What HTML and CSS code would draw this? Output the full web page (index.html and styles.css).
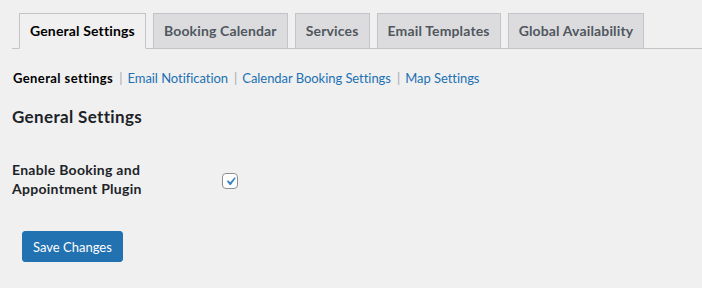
FILE: index.html
```html
<!DOCTYPE html>
<html>
    <head>
        <title>Booking Settings</title>
        <link rel="stylesheet" href="styles.css">
    </head>

    <body>
        <div class="wrap">
            <nav class="nav_tabs">
                <a class="nav_tab active" href="#">General Settings</a>
                <a class="nav_tab" href="#">Booking Calendar</a>
                <a class="nav_tab" href="#">Services</a>
                <a class="nav_tab" href="#">Email Templates</a>
                <a class="nav_tab" href="#">Global Availability</a>
            </nav>

            <ul class="subsub">
                <li class="current">General settings</li>
                <li class="sep">|</li>
                <li><a href="#">Email Notification</a></li>
                <li class="sep">|</li>
                <li><a href="#">Calendar Booking Settings</a></li>
                <li class="sep">|</li>
                <li><a href="#">Map Settings</a></li>
            </ul>

            <h2 class="section_title">General Settings</h2>

            <div class="form_row">
                <div class="form_label">Enable Booking and<br>Appointment Plugin</div>
                <div class="form_field">
                    <span class="check_box">
                        <svg viewBox="0 0 20 20" width="20" height="20">
                            <path d="M14.83 4.89l1.34.94-5.81 8.38H9.02L5.78 9.67l1.34-1.25 2.57 2.4z" fill="#3582c4"/>
                        </svg>
                    </span>
                </div>
            </div>

            <div class="submit_row">
                <button class="btn_primary">Save Changes</button>
            </div>
        </div>
    </body>
</html>
```

FILE: styles.css
```css
body {
    margin: 0;
    background-color: #f0f0f1;
    color: #1d2327;
    font-family: Lato, "Open Sans", sans-serif;
    font-size: 13px;
}

.wrap {
    padding: 0 0 0 12px;
}

/* tabs along the top */
.nav_tabs {
    display: flex;
    align-items: flex-end;
    padding-top: 13px;
    border-bottom: 1px solid #c3c4c7;
}

.nav_tab {
    margin-left: 7px;
    padding: 5px 10px;
    border: 1px solid #c3c4c7;
    border-bottom: none;
    background-color: #dcdcde;
    color: #50575e;
    font-size: 14px;
    font-weight: 700;
    line-height: 24px;
    letter-spacing: 0.15px;
    text-decoration: none;
}

.nav_tab.active {
    margin-bottom: -1px;
    border-bottom: 1px solid #f0f0f1;
    background-color: #f0f0f1;
    color: #000;
}

/* sub links */
.subsub {
    display: flex;
    list-style: none;
    margin: 16px 0 0 1px;
    padding: 0;
    line-height: 26px;
    color: #646970;
}

.subsub > li.current {
    font-weight: 700;
    letter-spacing: 0.4px;
    color: #000;
}

.subsub > li.sep {
    margin: 0 5px 0 6px;
    color: #a7aaad;
}

.subsub a {
    color: #2271b1;
    letter-spacing: -0.05px;
    text-decoration: none;
}

.section_title {
    margin: 15px 0 0;
    font-size: 17px;
    font-weight: 700;
    line-height: 22px;
    letter-spacing: 0.35px;
    color: #1d2327;
}

.form_row {
    display: flex;
    align-items: center;
    margin-top: 32px;
}

.form_label {
    width: 200px;
    padding-right: 10px;
    font-size: 14px;
    font-weight: 700;
    line-height: 19px;
    letter-spacing: 0.28px;
}

.form_field {
    padding-top: 4px;
}

.check_box {
    display: flex;
    align-items: center;
    justify-content: center;
    width: 14px;
    height: 14px;
    border: 1px solid #8c8f94;
    border-radius: 4px;
    background-color: #fff;
}

.check_box > svg {
    width: 17px;
    height: 17px;
    flex-shrink: 0;
}

.submit_row {
    margin-top: 33px;
    padding-left: 10px;
}

.btn_primary {
    height: 31px;
    padding: 0 10px;
    border: 1px solid #2271b1;
    border-radius: 3px;
    background-color: #2271b1;
    color: #fff;
    font-family: Lato, "Open Sans", sans-serif;
    font-size: 13px;
}
```
